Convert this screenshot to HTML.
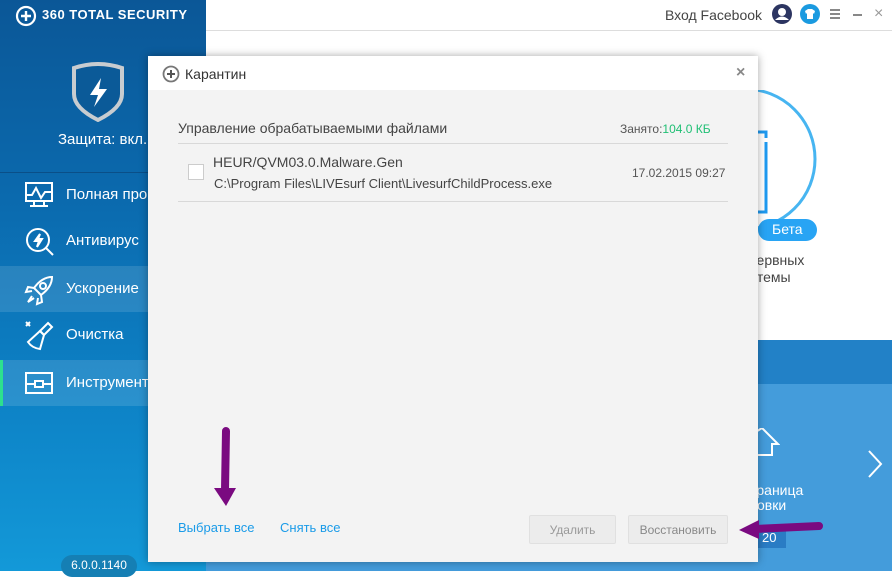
<!DOCTYPE html>
<html><head><meta charset="utf-8"><style>
*{margin:0;padding:0;box-sizing:border-box}
body{width:892px;height:571px;overflow:hidden;position:relative;font-family:"Liberation Sans",sans-serif;background:#fff}
.abs{position:absolute}
#side{left:0;top:0;width:206px;height:571px;background:linear-gradient(#0b5797 0%,#0b6aae 35%,#0d82c6 70%,#1399d8 100%)}
.nav{position:absolute;left:0;width:206px;height:46px;color:#fff;font-size:15px}
.nav span{position:absolute;left:66px;top:14px}
.nav svg{position:absolute;left:24px;top:8px}
</style></head><body>
<div id="side" class="abs">
 <svg class="abs" style="left:15px;top:5px" width="22" height="22" viewBox="0 0 22 22"><circle cx="11" cy="11" r="9" fill="none" stroke="#fff" stroke-width="2.2"/><path d="M11 6v10M6 11h10" stroke="#fff" stroke-width="2.4"/></svg>
 <div class="abs" style="left:42px;top:7px;color:#fff;font-weight:bold;font-size:13px;letter-spacing:0.5px">360 TOTAL SECURITY</div>
 <svg class="abs" style="left:70px;top:62px" width="56" height="60" viewBox="0 0 56 60"><path d="M4 6Q28 -2 52 6V32Q52 46 28 58Q4 46 4 32Z" fill="#0b5a98" stroke="#c8ccd0" stroke-width="4"/><path d="M31 16L20 33H28L24 45L37 27H29Z" fill="#fff"/></svg>
 <div class="abs" style="left:58px;top:131px;color:#fff;font-size:15px">Защита: вкл.</div>
 <div class="abs" style="left:0;top:172px;width:206px;height:1px;background:#0a4f88"></div>
 <div class="nav" style="top:172px"><svg width="30" height="30" viewBox="0 0 30 30" fill="none" stroke="#fff" stroke-width="2"><rect x="2" y="3" width="26" height="18"/><path d="M2 15l6 0 4-7 5 10 4-6 7 0M10 21v4M20 21v4M6 26h18"/></svg><span>Полная про</span></div>
 <div class="nav" style="top:218px"><svg width="32" height="32" viewBox="0 0 32 32" fill="none" stroke="#fff" stroke-width="2"><circle cx="14" cy="14" r="11"/><path d="M22 22l7 7"/><path d="M16 8l-5 7h4l-2 6 5-8h-4z" fill="#fff"/></svg><span>Антивирус</span></div>
 <div class="nav" style="top:266px;background:rgba(255,255,255,0.12)"><svg width="32" height="32" viewBox="0 0 32 32" fill="none" stroke="#fff" stroke-width="2"><path d="M28 3Q18 3 10 14L17 21Q28 13 28 3Z"/><circle cx="19" cy="12" r="3"/><path d="M10 14L4 13 2 18 8 17M17 21L18 28 13 30 14 24M8 22l-4 6 6-4"/></svg><span>Ускорение</span></div>
 <div class="nav" style="top:312px"><svg width="32" height="32" viewBox="0 0 32 32" fill="none" stroke="#fff" stroke-width="2"><path d="M2 2l4 4M6 2l-4 4"/><path d="M24 3l4 4-8 8-4-4z"/><path d="M16 11l4 4-4 14Q8 28 4 22Z"/></svg><span>Очистка</span></div>
 <div class="nav" style="top:360px;background:rgba(255,255,255,0.12)"><div style="position:absolute;left:0;top:0;width:3px;height:46px;background:#2de08e"></div><svg width="30" height="30" viewBox="0 0 30 30" fill="none" stroke="#fff" stroke-width="2"><rect x="2" y="5" width="26" height="20"/><path d="M2 16h26"/><rect x="11" y="13" width="8" height="6" fill="#1e88c6"/></svg><span>Инструмент</span></div>
 <div class="abs" style="left:61px;top:555px;width:76px;height:22px;border-radius:11px;background:#157fb4;color:#fff;font-size:12px;text-align:center;padding-top:3px">6.0.0.1140</div>
</div>
<!-- top bar -->
<div class="abs" style="left:206px;top:30px;width:686px;height:1px;background:#ddd"></div>
<div class="abs" style="left:665px;top:7px;font-size:14px;color:#444">Вход Facebook</div>
<svg class="abs" style="left:772px;top:4px" width="20" height="20" viewBox="0 0 20 20"><circle cx="10" cy="10" r="10" fill="#2c3561"/><circle cx="10" cy="8" r="4" fill="#fff"/><path d="M3 16Q10 9 17 16" fill="#fff"/></svg>
<svg class="abs" style="left:800px;top:4px" width="20" height="20" viewBox="0 0 20 20"><circle cx="10" cy="10" r="10" fill="#1a9ae0"/><path d="M5 7l3-2h4l3 2-1 3-1-1v6H7V9l-1 1z" fill="#fff"/></svg>
<div class="abs" style="left:830px;top:9px;width:10px;height:2px;background:#888;box-shadow:0 4px 0 #888,0 8px 0 #888"></div>
<div class="abs" style="left:853px;top:14px;width:9px;height:2px;background:#888"></div>
<div class="abs" style="left:874px;top:5px;font-size:16px;color:#999">×</div>
<!-- right content -->
<svg class="abs" style="left:680px;top:90px" width="140" height="160" viewBox="0 0 140 160"><circle cx="65" cy="69" r="70" fill="none" stroke="#47b5f1" stroke-width="3"/><path d="M60 42h26v6M86 52v70H60" fill="none" stroke="#1e9af0" stroke-width="3"/><path d="M75 64v36" stroke="#1e9af0" stroke-width="3"/></svg>
<div class="abs" style="left:758px;top:219px;width:59px;height:22px;border-radius:11px;background:#28a4f4;color:#fff;font-size:14px;padding:2px 0 0 14px">Бета</div>
<div class="abs" style="left:735px;top:252px;font-size:14px;color:#444;line-height:17px">резервных<br>системы</div>
<div class="abs" style="left:206px;top:340px;width:686px;height:44px;background:#2281c7"></div>
<div class="abs" style="left:206px;top:384px;width:686px;height:187px;background:#449cdb"></div>
<svg class="abs" style="left:740px;top:428px" width="40" height="40" viewBox="0 0 40 40"><path d="M0 14L22 0 38 16H32V27H14" fill="none" stroke="#fff" stroke-width="2"/></svg>
<div class="abs" style="left:735px;top:483px;font-size:14px;color:#fff;line-height:15px">Устраница<br>тировки</div>
<div class="abs" style="left:750px;top:528px;width:36px;height:20px;background:#2a7cc4;color:#fff;font-size:13px;padding:2px 0 0 12px">20</div>
<svg class="abs" style="left:866px;top:448px" width="20" height="32" viewBox="0 0 20 32"><path d="M3 3l12 13-12 13" fill="none" stroke="#fff" stroke-width="2"/></svg>
<!-- dialog -->
<div class="abs" style="left:148px;top:56px;width:610px;height:506px;background:#f3f3f3;box-shadow:0 0 8px rgba(0,0,0,0.35)">
 <div class="abs" style="left:0;top:0;width:610px;height:34px;background:#fff"></div>
 <svg class="abs" style="left:14px;top:9px" width="18" height="18" viewBox="0 0 18 18"><circle cx="9" cy="9" r="7.5" fill="none" stroke="#777" stroke-width="1.8"/><path d="M9 5v8M5 9h8" stroke="#555" stroke-width="2"/></svg>
 <div class="abs" style="left:37px;top:10px;font-size:14px;color:#333">Карантин</div>
 <div class="abs" style="left:588px;top:8px;font-size:16px;color:#888;font-weight:bold">×</div>
 <div class="abs" style="left:30px;top:64px;font-size:14px;color:#444">Управление обрабатываемыми файлами</div>
 <div class="abs" style="left:472px;top:66px;font-size:12px;color:#555">Занято:<span style="color:#1fbf74">104.0 КБ</span></div>
 <div class="abs" style="left:30px;top:87px;width:550px;height:1px;background:#d8d8d8"></div>
 <div class="abs" style="left:40px;top:108px;width:16px;height:16px;border:1px solid #ccc;background:#fff"></div>
 <div class="abs" style="left:65px;top:98px;font-size:14px;color:#444">HEUR/QVM03.0.Malware.Gen</div>
 <div class="abs" style="left:66px;top:120px;font-size:13px;color:#444">C:\Program Files\LIVEsurf Client\LivesurfChildProcess.exe</div>
 <div class="abs" style="left:484px;top:110px;font-size:12px;color:#555">17.02.2015 09:27</div>
 <div class="abs" style="left:30px;top:145px;width:550px;height:1px;background:#d8d8d8"></div>
 <div class="abs" style="left:30px;top:464px;font-size:13px;color:#1a9be8">Выбрать все</div>
 <div class="abs" style="left:132px;top:464px;font-size:13px;color:#1a9be8">Снять все</div>
 <div class="abs" style="left:381px;top:459px;width:87px;height:29px;background:#ececec;border:1px solid #e0e0e0;border-radius:2px;font-size:12px;color:#999;text-align:center;padding-top:7px">Удалить</div>
 <div class="abs" style="left:480px;top:459px;width:100px;height:29px;background:#ececec;border:1px solid #e0e0e0;border-radius:2px;font-size:12px;color:#888;text-align:center;padding-top:7px">Восстановить</div>
</div>
<!-- arrows -->
<svg class="abs" style="left:205px;top:420px" width="40" height="90" viewBox="0 0 40 90"><path d="M21 11L20 70" stroke="#7a0a80" stroke-width="8" stroke-linecap="round"/><path d="M9 68L31 68 21 86Z" fill="#7a0a80"/></svg>
<svg class="abs" style="left:735px;top:515px" width="95" height="30" viewBox="0 0 95 30"><path d="M20 14L84 11" stroke="#7a0a80" stroke-width="8" stroke-linecap="round"/><path d="M4 15L24 5 24 24Z" fill="#7a0a80"/></svg>
</body></html>
